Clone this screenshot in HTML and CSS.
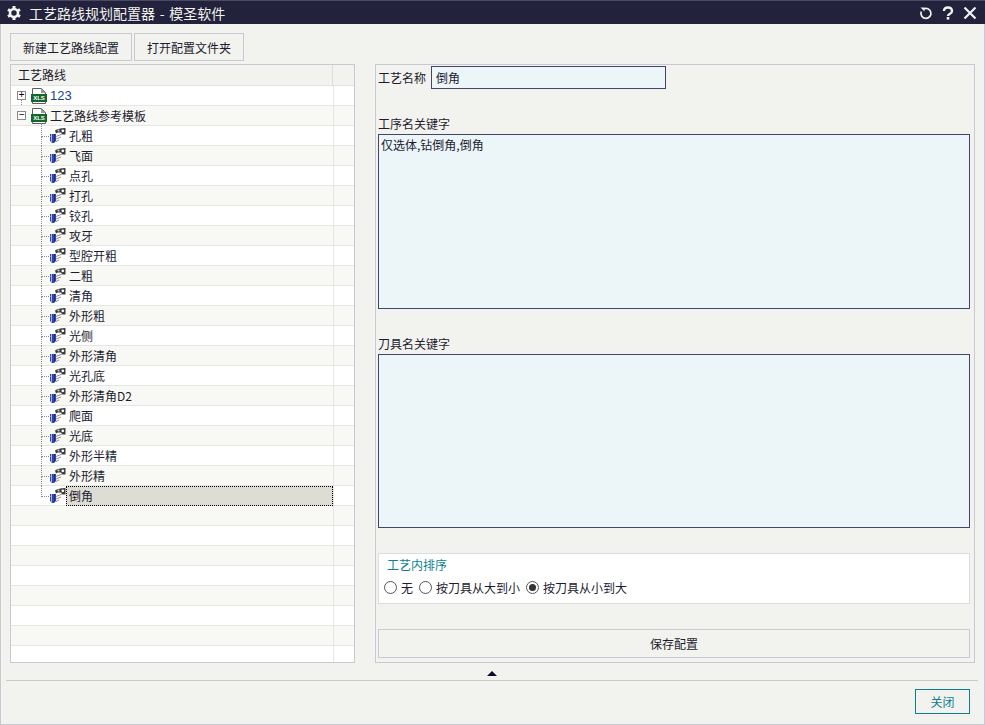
FILE: index.html
```html
<!DOCTYPE html>
<html lang="zh-CN">
<head>
    <meta charset="UTF-8">
    <title>工艺路线规划配置器 - 模圣软件</title>
    <link rel="stylesheet" href="styles.css">
</head>
<body>
    <svg class="defs" width="0" height="0">
        <symbol id="icon-op" viewBox="0 0 16 16">
            <path d="M0 6H6V13L4 15H2L0 13Z" fill="#3347a8"/>
            <rect x="1" y="6" width="1" height="8" fill="#a3b0f0"/>
            <rect x="4" y="6" width="1" height="8" fill="#22307c"/>
            <path d="M6 8.500L12 6M6 11L11 9M6 13.500L9 12" stroke="#8f8f9c" fill="none"/>
            <path d="M5 2.500Q8 0 15.500 0V6.500H12.500L11 4.500H7.500L6 5.500Z" fill="#3c3c3c"/>
            <circle cx="12.800" cy="2.800" r="1.400" fill="#fff"/>
            <circle cx="8.500" cy="2.600" r="1" fill="#d8d8d8"/>
        </symbol>
    </svg>

    <div class="window">
        <header class="titlebar">
            <svg class="title-gear" viewBox="0 0 16 16" width="16" height="16">
                <path d="M8 1V15M2 4.500L14 11.500M14 4.500L2 11.500" stroke="#f2f2ee" stroke-width="3"/>
                <circle cx="8" cy="8" r="5.300" fill="#f2f2ee"/>
                <circle cx="8" cy="8" r="2.700" fill="#22223c"/>
            </svg>
            <span class="title-text">工艺路线规划配置器 - 模圣软件</span>
            <div class="title-actions">
                <svg viewBox="0 0 14 14" width="14" height="14">
                    <path d="M4.500 3A5 5 0 1 1 2.300 5.500" fill="none" stroke="#f2f2ee" stroke-width="1.700"/>
                    <path d="M1.500 1.500H5.500V5.500Z" fill="#f2f2ee"/>
                </svg>
                <svg viewBox="0 0 14 14" width="14" height="14">
                    <path d="M3 5Q3 1.500 7 1.500T11 5Q11 6.700 9 7.700T7 10" fill="none" stroke="#f2f2ee" stroke-width="2.400"/>
                    <rect x="5.700" y="11" width="2.600" height="2.600" fill="#f2f2ee"/>
                </svg>
                <svg viewBox="0 0 14 14" width="14" height="14">
                    <path d="M1.500 1.500L12.500 12.500M12.500 1.500L1.500 12.500" stroke="#f2f2ee" stroke-width="2.200"/>
                </svg>
            </div>
        </header>

        <div class="toolbar">
            <button class="tool-btn new-btn">新建工艺路线配置</button>
            <button class="tool-btn open-btn">打开配置文件夹</button>
        </div>

        <div class="main">
            <section class="tree-panel">
                <div class="tree-head"><span class="tree-head-name">工艺路线</span><span class="tree-head-rest"></span></div>
                <div class="tree-row root first">
                    <span class="toggle">+</span>
                    <svg class="xls" viewBox="0 0 16 16">
                        <path d="M1.500 .5H10.500L14.500 4.500V15.500H1.500Z" fill="#fff" stroke="#5e5e5e"/>
                        <path d="M10 0V5H15Z" fill="#9a9a9a"/>
                        <rect x="0" y="6" width="16" height="8" fill="#14662a"/>
                        <text x="8" y="12.400" class="xls-text">XLS</text>
                    </svg>
                    <span class="node-text num">123</span>
                </div>
                <div class="tree-row root second">
                    <span class="toggle">−</span>
                    <svg class="xls" viewBox="0 0 16 16">
                        <path d="M1.500 .5H10.500L14.500 4.500V15.500H1.500Z" fill="#fff" stroke="#5e5e5e"/>
                        <path d="M10 0V5H15Z" fill="#9a9a9a"/>
                        <rect x="0" y="6" width="16" height="8" fill="#14662a"/>
                        <text x="8" y="12.400" class="xls-text">XLS</text>
                    </svg>
                    <span class="node-text">工艺路线参考模板</span>
                </div>
                <div class="tree-row child"><svg class="op"><use href="#icon-op"/></svg><span class="node-text">孔粗</span></div>
                <div class="tree-row child"><svg class="op"><use href="#icon-op"/></svg><span class="node-text">飞面</span></div>
                <div class="tree-row child"><svg class="op"><use href="#icon-op"/></svg><span class="node-text">点孔</span></div>
                <div class="tree-row child"><svg class="op"><use href="#icon-op"/></svg><span class="node-text">打孔</span></div>
                <div class="tree-row child"><svg class="op"><use href="#icon-op"/></svg><span class="node-text">铰孔</span></div>
                <div class="tree-row child"><svg class="op"><use href="#icon-op"/></svg><span class="node-text">攻牙</span></div>
                <div class="tree-row child"><svg class="op"><use href="#icon-op"/></svg><span class="node-text">型腔开粗</span></div>
                <div class="tree-row child"><svg class="op"><use href="#icon-op"/></svg><span class="node-text">二粗</span></div>
                <div class="tree-row child"><svg class="op"><use href="#icon-op"/></svg><span class="node-text">清角</span></div>
                <div class="tree-row child"><svg class="op"><use href="#icon-op"/></svg><span class="node-text">外形粗</span></div>
                <div class="tree-row child"><svg class="op"><use href="#icon-op"/></svg><span class="node-text">光侧</span></div>
                <div class="tree-row child"><svg class="op"><use href="#icon-op"/></svg><span class="node-text">外形清角</span></div>
                <div class="tree-row child"><svg class="op"><use href="#icon-op"/></svg><span class="node-text">光孔底</span></div>
                <div class="tree-row child"><svg class="op"><use href="#icon-op"/></svg><span class="node-text">外形清角D2</span></div>
                <div class="tree-row child"><svg class="op"><use href="#icon-op"/></svg><span class="node-text">爬面</span></div>
                <div class="tree-row child"><svg class="op"><use href="#icon-op"/></svg><span class="node-text">光底</span></div>
                <div class="tree-row child"><svg class="op"><use href="#icon-op"/></svg><span class="node-text">外形半精</span></div>
                <div class="tree-row child"><svg class="op"><use href="#icon-op"/></svg><span class="node-text">外形精</span></div>
                <div class="tree-row child last"><svg class="op"><use href="#icon-op"/></svg><span class="node-text selected">倒角</span></div>
                <div class="tree-row"></div>
                <div class="tree-row"></div>
                <div class="tree-row"></div>
                <div class="tree-row"></div>
                <div class="tree-row"></div>
                <div class="tree-row"></div>
                <div class="tree-row"></div>
                <div class="tree-row"></div>
            </section>

            <section class="form-panel">
                <div class="name-row">
                    <label class="name-label">工艺名称</label>
                    <div class="field name-field">倒角</div>
                </div>
                <label class="field-label op-label">工序名关键字</label>
                <div class="field area op-area">仅选体,钻倒角,倒角</div>
                <label class="field-label tool-label">刀具名关键字</label>
                <div class="field area tool-area"></div>
                <div class="sort-group">
                    <div class="sort-title">工艺内排序</div>
                    <div class="radios">
                        <span class="radio"></span><span class="radio-text">无</span>
                        <span class="radio"></span><span class="radio-text">按刀具从大到小</span>
                        <span class="radio checked"></span><span class="radio-text">按刀具从小到大</span>
                    </div>
                </div>
                <button class="save-btn">保存配置</button>
            </section>
        </div>

        <div class="sash"><span class="sash-arrow"></span></div>

        <footer class="footer">
            <button class="close-btn">关闭</button>
        </footer>
    </div>
</body>
</html>
```

FILE: styles.css
```css
* {
    box-sizing: border-box;
}

html, body {
    margin: 0;
    padding: 0;
}

body {
    width: 985px;
    height: 725px;
    overflow: hidden;
    font-family: "Noto Sans CJK SC", "Noto Sans", sans-serif;
    font-size: 12px;
    color: #1c1c30;
    background-color: #f2f2ee;
}

.defs {
    position: absolute;
}

.xls-text {
    font-family: "Liberation Sans", sans-serif;
    font-size: 6px;
    font-weight: bold;
    fill: #fff;
    text-anchor: middle;
}

.window {
    display: flex;
    flex-direction: column;
    width: 985px;
    height: 725px;
    border: 1px solid #c9c9d3;
    border-top: none;
}

.titlebar {
    display: flex;
    align-items: center;
    height: 24px;
    margin: 0 -1px;
    padding: 0 8px 0 6px;
    background-color: #22223c;
    color: #f2f2ee;
    border-top: 1px solid #4a4a60;
}

.title-text {
    margin-left: 7px;
    font-size: 14px;
    word-spacing: 1.500px;
}

.title-actions {
    display: flex;
    gap: 8px;
    margin-left: auto;
}

.toolbar {
    display: flex;
    gap: 2px;
    height: 28px;
    margin: 9px 0 3px 9px;
}

.tool-btn {
    height: 28px;
    padding: 0;
    font: inherit;
    color: inherit;
    background-color: #f2f2ee;
    border: 1px solid #c9c9d3;
}

.new-btn {
    width: 122px;
}

.open-btn {
    width: 110px;
}

.main {
    display: flex;
    gap: 20px;
    height: 599px;
    margin-left: 9px;
}

.tree-panel {
    width: 345px;
    height: 599px;
    overflow: hidden;
    background-color: #fff;
    border: 1px solid #c9c9d3;
}

.tree-head {
    display: flex;
    height: 21px;
    background-color: #f2f2ee;
    border-bottom: 1px solid #e2e2e0;
}

.tree-head-name {
    width: 322px;
    padding-left: 7px;
    line-height: 20px;
    border-right: 1px solid #dcdcda;
}

.tree-row {
    position: relative;
    display: flex;
    align-items: center;
    height: 20px;
    width: 343px;
    border-bottom: 1px solid #e6e6e4;
    background-image: linear-gradient(#e6e6e4, #e6e6e4);
    background-size: 1px 100%;
    background-position: 322px 0;
    background-repeat: no-repeat;
}

.tree-row:nth-child(odd) {
    background-color: #f8f8f5;
}

.root {
    padding-left: 6px;
}

.toggle {
    display: flex;
    align-items: center;
    justify-content: center;
    width: 9px;
    height: 9px;
    font-family: "Liberation Mono", monospace;
    font-size: 10px;
    line-height: 9px;
    color: #000;
    background-color: #fff;
    border: 1px solid #8a8a8a;
}

.xls {
    width: 16px;
    height: 16px;
    margin-left: 5px;
}

.root .node-text {
    margin-left: 3px;
}

.num {
    font-family: "Liberation Sans", sans-serif;
    font-size: 13px;
    color: #1d3f8a;
}

.root.first::after {
    content: "";
    position: absolute;
    left: 10px;
    top: 14px;
    height: 7px;
    border-left: 1px dotted #8a8a8a;
}

.root.second::after {
    content: "";
    position: absolute;
    left: 30px;
    top: 17px;
    height: 4px;
    border-left: 1px dotted #8a8a8a;
}

.child {
    padding-left: 39px;
}

.child::before {
    content: "";
    position: absolute;
    left: 30px;
    top: 0;
    width: 9px;
    height: 10px;
    border-left: 1px dotted #8a8a8a;
    border-bottom: 1px dotted #8a8a8a;
}

.child::after {
    content: "";
    position: absolute;
    left: 30px;
    top: 10px;
    height: 10px;
    border-left: 1px dotted #8a8a8a;
}

.child.last::after {
    display: none;
}

.op {
    width: 16px;
    height: 16px;
    flex: none;
}

.child .node-text {
    margin-left: 3px;
}

.selected {
    display: flex;
    align-items: center;
    flex: 1;
    height: 20px;
    margin-left: 0 !important;
    margin-right: 21px;
    padding-left: 3px;
    background-color: #ddddd5;
    outline: 1px dotted #000;
    outline-offset: -1px;
}

.form-panel {
    display: flex;
    flex-direction: column;
    width: 600px;
    height: 599px;
    padding: 1px 4px 4px 2px;
    border: 1px solid #c9c9d3;
}

.name-row {
    display: flex;
    align-items: center;
    height: 23px;
}

.name-label {
    width: 53px;
}

.field {
    background-color: #ecf6f9;
    border: 1px solid #44446a;
}

.name-field {
    width: 235px;
    height: 23px;
    padding-left: 4px;
    line-height: 21px;
}

.field-label {
    display: block;
    height: 18px;
    line-height: 18px;
}

.op-label {
    margin-top: 26px;
}

.tool-label {
    margin-top: 26px;
}

.area {
    width: 592px;
    padding: 1px 2px;
    line-height: 18px;
}

.op-area {
    height: 175px;
    margin-top: 1px;
}

.tool-area {
    height: 174px;
    margin-top: 1px;
}

.sort-group {
    width: 592px;
    height: 51px;
    margin-top: 25px;
    padding: 1px 5px 0;
    background-color: #fff;
    border: 1px solid #dcdcdc;
}

.sort-title {
    height: 20px;
    padding-left: 3px;
    line-height: 20px;
    color: #0d7f91;
}

.radios {
    display: flex;
    align-items: center;
    height: 25px;
}

.radio {
    position: relative;
    width: 13px;
    height: 13px;
    background-color: #fff;
    border: 1px solid #555;
    border-radius: 50%;
}

.radio.checked::after {
    content: "";
    position: absolute;
    left: 2px;
    top: 2px;
    width: 7px;
    height: 7px;
    background-color: #333;
    border-radius: 50%;
}

.radio-text {
    margin: 0 6px 0 4px;
}

.save-btn {
    width: 592px;
    height: 29px;
    margin-top: 25px;
    padding: 0;
    font: inherit;
    color: inherit;
    background-color: #f2f2ee;
    border: 1px solid #c9c9d3;
}

.sash {
    display: flex;
    justify-content: center;
    align-items: center;
    height: 18px;
    width: 972px;
    margin-left: 5px;
    padding: 4px 0 0 0;
    border-bottom: 1px solid #c9c9d3;
}

.sash-arrow {
    width: 0;
    height: 0;
    border-left: 5px solid transparent;
    border-right: 5px solid transparent;
    border-bottom: 5px solid #0a0a2e;
}

.footer {
    display: flex;
    justify-content: flex-end;
    padding: 8px 14px 0 0;
}

.close-btn {
    width: 55px;
    height: 25px;
    padding: 0;
    font: inherit;
    color: #0d7f91;
    background-color: #f2f2ee;
    border: 1px solid #0d7f91;
}
```
